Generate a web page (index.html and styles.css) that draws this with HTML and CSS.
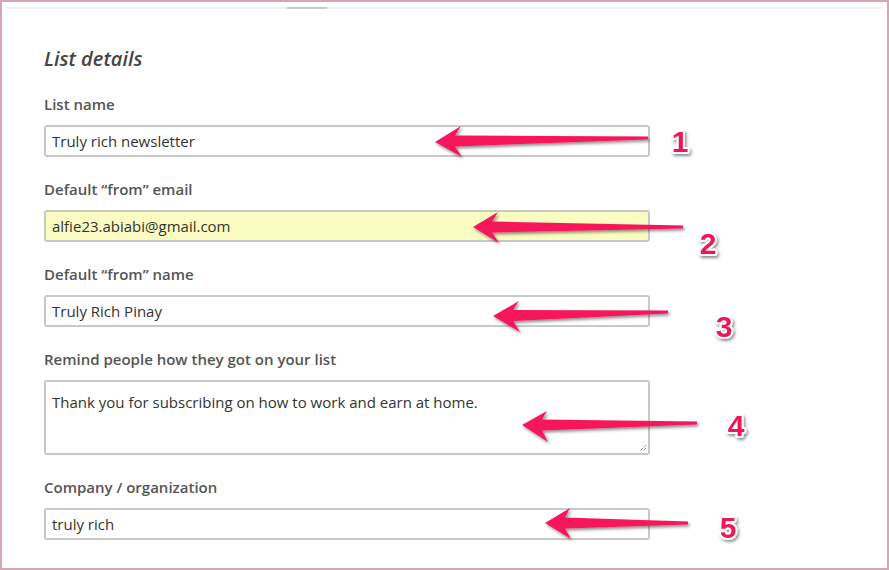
FILE: index.html
```html
<!DOCTYPE html>
<html lang="en">
<head>
<meta charset="utf-8">
<title>List details</title>
<link rel="stylesheet" href="styles.css">
</head>
<body>
<div class="frame">
  <div class="topbar"><div class="topbar-seg"></div></div>
  <form class="form">
    <h2 class="title">List details</h2>
    <div class="field">
      <label class="label">List name</label>
      <div class="input">Truly rich newsletter</div>
    </div>
    <div class="field">
      <label class="label">Default “from” email</label>
      <div class="input input-filled">alfie23.abiabi@gmail.com</div>
    </div>
    <div class="field">
      <label class="label">Default “from” name</label>
      <div class="input">Truly Rich Pinay</div>
    </div>
    <div class="field">
      <label class="label">Remind people how they got on your list</label>
      <div class="input textarea">Thank you for subscribing on how to work and earn at home.
        <svg class="grip" width="8" height="8" viewBox="0 0 8 8"><path d="M7 1 L1 7 M7 4 L4 7" stroke="#666" stroke-width="1" stroke-dasharray="1 1"/></svg>
      </div>
    </div>
    <div class="field">
      <label class="label">Company / organization</label>
      <div class="input">truly rich</div>
    </div>
  </form>
  <svg class="annotations" width="889" height="570" viewBox="0 0 889 570">
    <defs>
      <filter id="sh" x="-10%" y="-50%" width="120%" height="200%">
        <feDropShadow dx="1.5" dy="2" stdDeviation="1.5" flood-color="#000" flood-opacity="0.45"/>
      </filter>
    </defs>
    <g class="arrow" filter="url(#sh)">
      <polygon points="435,142 461,126 455,135.5 648,136.5 648,139.5 455,146.5 462,157"/>
      <polygon points="473,227 498,212 492,221.5 683,225.5 683,228.5 492,232.5 499,243"/>
      <polygon points="493,316 519,301 513,310 668,310.5 668,313.5 513,321 520,332"/>
      <polygon points="522,425 547,411 542,419.5 697,421.5 697,424.5 542,430.5 548,442"/>
      <polygon points="545,523 570,508 565,517.5 688,521.5 688,524.5 565,528.5 571,539"/>
    </g>
    <g class="nums" filter="url(#sh)">
      <text x="680" y="152">1</text>
      <text x="708" y="254">2</text>
      <text x="724" y="337">3</text>
      <text x="736" y="436">4</text>
      <text x="728" y="538">5</text>
    </g>
  </svg>
</div>
</body>
</html>
```

FILE: styles.css
```css
html, body {
  margin: 0;
  padding: 0;
  background: #fff;
}
.frame {
  position: relative;
  width: 889px;
  height: 570px;
  box-sizing: border-box;
  border: 2px solid #d4a6b6;
  background: #fff;
  overflow: hidden;
  font-family: "Open Sans", "Liberation Sans", sans-serif;
}
.topbar {
  margin: 5px 5px 0 5px;
  height: 2px;
  background: #f1f1f1;
}
.topbar-seg {
  margin-left: 280px;
  width: 40px;
  height: 2px;
  background: #c9c9c9;
}
.form {
  display: flex;
  flex-direction: column;
  padding-left: 42px;
  margin: 0;
}
.title {
  margin: 36px 0 0 0;
  font-size: 20px;
  line-height: 28px;
  font-style: italic;
  font-weight: 600;
  color: #444;
}
.field {
  display: flex;
  flex-direction: column;
}
.title + .field {
  margin-top: 21px;
}
.field + .field {
  margin-top: 22px;
}
.label {
  font-size: 15px;
  line-height: 20px;
  font-weight: 600;
  color: #555;
  margin-bottom: 11px;
}
.input {
  position: relative;
  box-sizing: border-box;
  width: 606px;
  height: 32px;
  border: 2px solid #c8c8c8;
  border-radius: 3px;
  padding: 0 6px;
  font-size: 15px;
  line-height: 28px;
  color: #333;
  background: #fff;
}
.input-filled {
  background: #fafcc2;
}
.textarea {
  height: 75px;
  padding-top: 6px;
}
.grip {
  position: absolute;
  right: 1px;
  bottom: 1px;
}
.annotations {
  position: absolute;
  left: -2px;
  top: -2px;
}
.arrow polygon {
  fill: #f5195c;
}
.nums text {
  font-family: "Liberation Sans", Arial, sans-serif;
  font-weight: 700;
  font-size: 30px;
  text-anchor: middle;
  fill: #ee1459;
  stroke: #fff;
  stroke-width: 4px;
  paint-order: stroke;
  stroke-linejoin: round;
  letter-spacing: 0;
}
```
